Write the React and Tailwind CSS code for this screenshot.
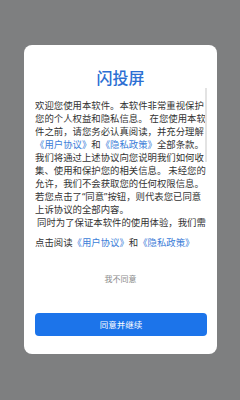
import React from "react";

const Link = ({ children }) => <span className="text-[#3b7dd8]">{children}</span>;
const Q = ({ children }) => <span className="font-['Noto_Sans']">{children}</span>;

const lines = [
  "欢迎您使用本软件。本软件非常重视保护",
  "您的个人权益和隐私信息。 在您使用本软",
  "件之前，请您务必认真阅读，并充分理解",
  "links",
  "我们将通过上述协议向您说明我们如何收",
  "集、使用和保护您的相关信息。 未经您的",
  "允许，我们不会获取您的任何权限信息。",
  "quote",
  "上诉协议的全部内容。",
  " 同时为了保证本软件的使用体验，我们需",
];

const App = () => {
  return (
    <div
      className="w-[240px] h-[400px] bg-[#7e7f80] pt-[45px] pl-[24px]"
      style={{ fontFamily: '"Noto Sans CJK SC", "Noto Sans", sans-serif' }}
    >
      <div className="flex h-[309px] w-[193px] flex-col rounded-[8px] bg-white pl-[11px] pr-[9px] pt-[21px]">
        <h1 className="h-[22px] pr-[2px] text-center text-[16px] font-medium leading-[22px] text-[#2c6fd3]">
          闪投屏
        </h1>

        {/* agreement text, scrolled */}
        <div className="relative h-[141px] overflow-hidden pt-[11px]">
          <div className="whitespace-pre text-[9.4px] leading-[13px] text-[#333333]">
            {lines.map((line, index) => {
              if (line === "links") {
                return (
                  <div key={index}>
                    <Link>《用户协议》</Link>和<Link>《隐私政策》</Link>全部条款。
                  </div>
                );
              }
              if (line === "quote") {
                return (
                  <div key={index}>
                    若您点击了<Q>“</Q>同意<Q>”</Q>按钮，则代表您已同意
                  </div>
                );
              }
              return <div key={index}>{line}</div>;
            })}
          </div>
          <div className="absolute right-[1px] top-0 h-[74px] w-[2px] bg-[#e3e3e3]" />
        </div>

        <div className="mt-[7px] whitespace-pre text-[9.4px] leading-[13px] text-[#333333]">
          点击阅读<Link>《用户协议》</Link>和<Link>《隐私政策》</Link>
        </div>

        <button className="mt-[23px] pr-[2px] text-center text-[8px] leading-[13px] text-[#8a8a8a]">
          我不同意
        </button>

        <button className="mt-[28px] h-[23px] w-[172px] rounded-[4px] bg-[#1c74ea] text-[8.5px] text-white">
          同意并继续
        </button>
      </div>
    </div>
  );
};

export default App;
